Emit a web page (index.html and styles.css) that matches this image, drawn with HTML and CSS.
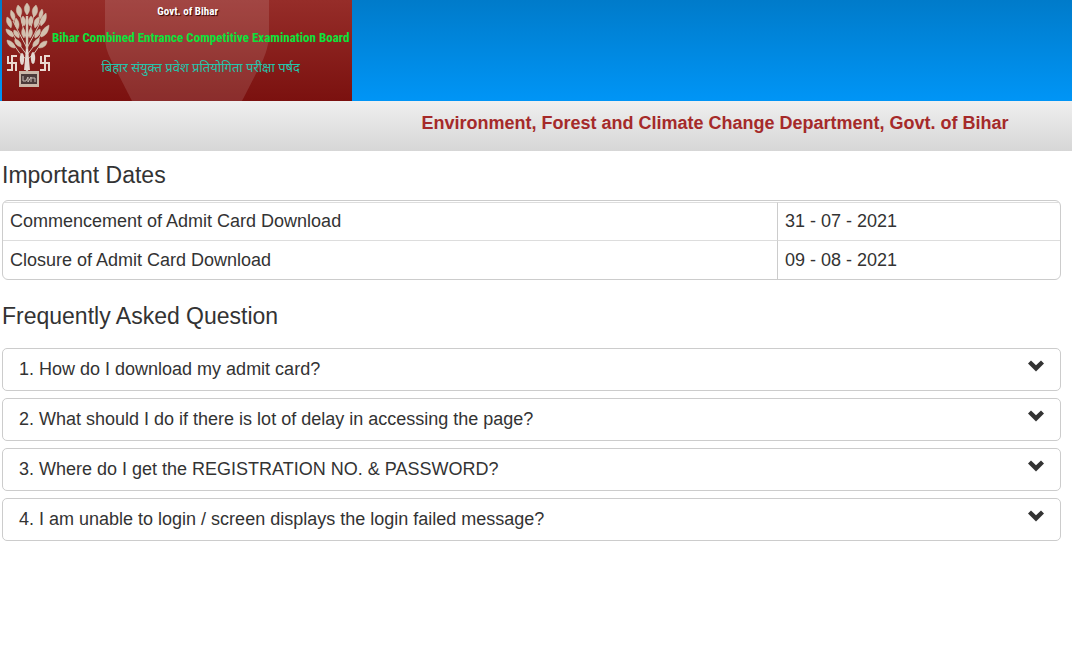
FILE: index.html
```html
<!DOCTYPE html>
<html lang="en">
<head>
<meta charset="utf-8">
<meta name="viewport" content="width=device-width, initial-scale=1">
<title>Bihar Combined Entrance Competitive Examination Board</title>
<link rel="stylesheet" href="styles.css">
</head>
<body>
<svg class="sprite" aria-hidden="true">
  <symbol id="chevron" viewBox="0 0 16 12">
    <path d="M0 3.4 3 .4 8 5.3 13 .4 16 3.4 8 11.4Z"/>
  </symbol>
</svg>

<header class="site-header">
  <div class="banner">
    <svg class="banner-shape" viewBox="0 0 350 101" preserveAspectRatio="none" aria-hidden="true">
      <path d="M103 0H267V38Q266 48 261 60L240 101H130L109 60Q103 48 103 38Z"/>
    </svg>
    <svg class="emblem" viewBox="0 0 50 101" role="img" aria-label="Government of Bihar emblem">
      <g fill="none" stroke="#d6c4b4" stroke-width="1">
        <path d="M25 72V16" stroke-width="2.4"/>
        <path d="M25 60Q17 54 12 45M25 55Q15 43 9 31M25 48Q17 33 11 21M25 40Q20 26 18 14M25 60Q33 54 38 45M25 55Q35 43 41 31M25 48Q33 33 39 21M25 40Q30 26 32 14"/>
      </g>
      <g fill="#d2c0ae" stroke="#d2c0ae" stroke-width=".5">
        <path d="M25 15C21 10 22 6 25 3 28 6 29 10 25 15Z"/>
        <path d="M18 17C13 13 14 8 16 5 20 8 21 12 18 17Z"/>
        <path d="M32 17C29 12 30 8 34 5 36 8 37 13 32 17Z"/>
        <path d="M9 28C4 24 4 20 5 17 9 19 11 23 9 28Z"/>
        <path d="M39 26C37 21 39 17 44 13 45 18 44 22 39 26Z"/>
        <path d="M12 21C8 17 8 13 9 10 13 13 14 17 12 21Z"/>
        <path d="M16 29C12 26 12 21 14 18 17 21 18 25 16 29Z"/>
        <path d="M38 19C36 16 37 12 40 9 42 12 41 16 38 19Z"/>
        <path d="M33 28C31 23 32 19 37 17 38 21 37 25 33 28Z"/>
        <path d="M22 26C18 22 19 18 21 16 24 19 25 23 22 26Z"/>
        <path d="M28 26C25 23 26 19 29 16 31 18 32 22 28 26Z"/>
        <path d="M11 37C6 36 4 32 4 29 9 30 12 33 11 37Z"/>
        <path d="M39 37C38 33 41 28 47 25 47 31 44 36 39 37Z"/>
        <path d="M17 38C12 36 11 33 12 30 16 31 18 34 17 38Z"/>
        <path d="M33 38C32 34 34 31 38 29 39 32 38 36 33 38Z"/>
        <path d="M13 48C8 48 5 44 5 40 10 41 13 44 13 48Z"/>
        <path d="M37 48C37 44 40 41 45 41 45 45 42 48 37 48Z"/>
        <path d="M19 47C14 46 12 42 13 39 17 40 20 43 19 47Z"/>
        <path d="M31 47C30 43 33 40 37 38 38 42 36 46 31 47Z"/>
        <path d="M22 38C19 35 19 31 21 28 24 31 24 35 22 38Z"/>
        <path d="M28 38C26 35 26 31 29 28 31 31 31 35 28 38Z"/>
      </g>
      <g fill="#e4d8d1">
        <ellipse cx="20" cy="59" rx="2.2" ry="6"/>
        <ellipse cx="31" cy="58" rx="2.2" ry="6"/>
        <path d="M24 49H26L28 70H22Z"/>
      </g>
      <g fill="none" stroke="#ead8d0" stroke-width="2">
        <path d="M6 56V63H14V71M15 56H10V70H5"/>
        <path d="M39 56V63H47V71M48 56H43V70H38"/>
      </g>
      <rect x="17" y="71" width="20" height="16" fill="#cbb7a9"/>
      <rect x="19" y="74" width="16" height="10" fill="#4c3b3b"/>
      <path d="M21 76V81H24L26 77V82L29 77V82M29 78H33V82" fill="none" stroke="#c8bcb5" stroke-width="1"/>
    </svg>
    <div class="banner-text">
      <p class="banner-state">Govt. of Bihar</p>
      <h1 class="banner-board">Bihar Combined Entrance Competitive Examination Board</h1>
      <p class="banner-hindi" lang="hi">बिहार संयुक्त प्रवेश प्रतियोगिता परीक्षा पर्षद</p>
    </div>
  </div>
</header>

<div class="department-bar">
  <p class="department">Environment, Forest and Climate Change Department, Govt. of Bihar</p>
</div>

<main class="content">
  <section>
    <h2 class="section-title">Important Dates</h2>
    <div class="dates-panel">
      <table class="dates">
        <tbody>
          <tr><th scope="row">Commencement of Admit Card Download</th><td>31 - 07 - 2021</td></tr>
          <tr><th scope="row">Closure of Admit Card Download</th><td>09 - 08 - 2021</td></tr>
        </tbody>
      </table>
    </div>
  </section>

  <section class="faq">
    <h2 class="section-title">Frequently Asked Question</h2>
    <div class="faq-list">
      <button class="faq-toggle" type="button"><span>1. How do I download my admit card?</span><svg class="chevron" aria-hidden="true"><use href="#chevron"/></svg></button>
      <button class="faq-toggle" type="button"><span>2. What should I do if there is lot of delay in accessing the page?</span><svg class="chevron" aria-hidden="true"><use href="#chevron"/></svg></button>
      <button class="faq-toggle" type="button"><span>3. Where do I get the REGISTRATION NO. &amp; PASSWORD?</span><svg class="chevron" aria-hidden="true"><use href="#chevron"/></svg></button>
      <button class="faq-toggle" type="button"><span>4. I am unable to login / screen displays the login failed message?</span><svg class="chevron" aria-hidden="true"><use href="#chevron"/></svg></button>
    </div>
  </section>
</main>
</body>
</html>
```
FILE: styles.css
```css
* {
  box-sizing: border-box;
}

body {
  margin: 0;
  background: #fff;
  color: #333;
  font: 18px/26px "Liberation Sans", Arial, sans-serif;
}

h1, h2, p {
  margin: 0;
}

.sprite {
  position: absolute;
  width: 0;
  height: 0;
}

.site-header {
  padding-left: 2px;
  background: linear-gradient(#007bca, #0095f6);
}

.banner {
  position: relative;
  display: flex;
  width: 350px;
  background: linear-gradient(#962d29, #7b110f);
}

.banner-shape {
  position: absolute;
  inset: 0;
  width: 100%;
  height: 100%;
  fill: #fff;
  fill-opacity: 0.12;
}

.emblem {
  position: relative;
  flex: none;
  width: 50px;
  height: 101px;
}

.banner-text {
  position: relative;
  flex: 1;
  padding-right: 4px;
  font-family: "Roboto Condensed", "Open Sans Condensed", Lato, sans-serif;
  font-weight: bold;
  text-align: center;
  white-space: nowrap;
}

.banner-state {
  padding-right: 26px;
  color: #fff;
  font-size: 11px;
  line-height: 24px;
  text-shadow: 1px 1px 1px #300;
}

.banner-board {
  color: #0ce23b;
  font-size: 13px;
  line-height: 28px;
}

.banner-hindi {
  color: #23c5ac;
  font-family: "Noto Sans Devanagari", "Noto Sans", sans-serif;
  font-size: 13px;
  font-weight: normal;
  line-height: 34px;
}

.department-bar {
  display: flex;
  justify-content: flex-end;
  padding: 9px 0 15px;
  background: linear-gradient(#efefef, #d6d6d6);
}

.department {
  width: 66.6%;
  color: #a52a2a;
  font-weight: bold;
  text-align: center;
}

.content {
  padding: 10px 11px 20px 2px;
}

.section-title {
  font-size: 23px;
  font-weight: normal;
  line-height: 28px;
}

.dates-panel {
  margin-top: 11px;
  padding-top: 1px;
  border: 1px solid #ccc;
  border-radius: 6px;
}

.dates {
  width: 100%;
  border-spacing: 0;
}

.dates th,
.dates td {
  padding: 6px 7px;
  border-top: 1px solid #ddd;
  font-weight: normal;
  line-height: 25px;
  text-align: left;
}

.dates tr:last-child > * {
  padding-top: 7px;
}

.dates td {
  width: 283px;
  border-left: 1px solid #ccc;
}

.faq {
  margin-top: 22px;
}

.faq-list {
  display: grid;
  gap: 7px;
  margin-top: 18px;
}

.faq-toggle {
  display: flex;
  align-items: flex-start;
  justify-content: space-between;
  width: 100%;
  padding: 7px 16px 8px;
  border: 1px solid #ccc;
  border-radius: 5px;
  background: #fff;
  color: inherit;
  font: inherit;
  text-align: left;
  cursor: pointer;
}

.chevron {
  flex: none;
  width: 16px;
  height: 12px;
  margin-top: 4px;
  fill: #333;
}
```
